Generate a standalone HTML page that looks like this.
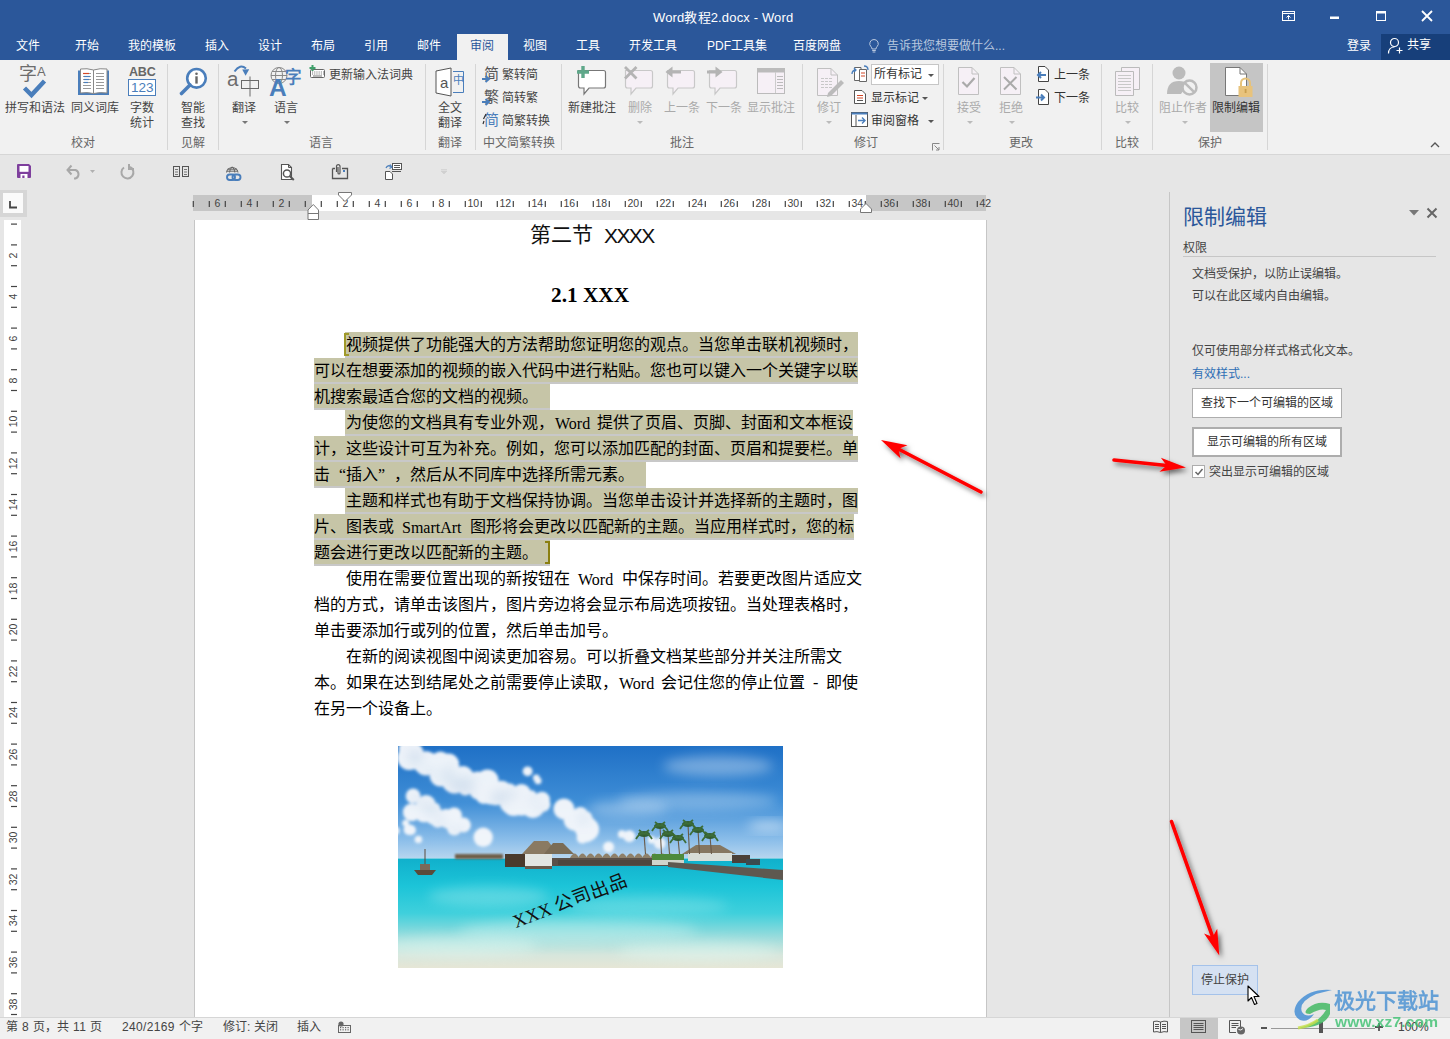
<!DOCTYPE html><html lang="zh-CN"><head><meta charset="utf-8"><title>Word</title><style>
*{margin:0;padding:0;box-sizing:border-box}
html,body{width:1450px;height:1039px;overflow:hidden;background:#e6e6e6;font-family:"Liberation Sans",sans-serif;position:relative}
.a{position:absolute}
.t{position:absolute;white-space:nowrap;line-height:1}
.w{color:#fff}
.g{color:#444}
.lg{color:#a8a8a8}
svg{position:absolute;overflow:visible}
.doc{position:absolute;white-space:nowrap;font-family:"Liberation Serif",serif;font-size:16px;line-height:26px;height:26px;color:#000}
</style></head><body>
<div class="a" style="left:0;top:0;width:1450px;height:60px;background:#2b579a"></div>
<div class="a" style="left:1381px;top:34px;width:69px;height:26px;background:#173f7a"></div>
<div class="a" style="left:457px;top:34px;width:51px;height:26px;background:#f1f1f1"></div>
<div class="a" style="left:0;top:60px;width:1450px;height:94px;background:#f1f1f1"></div>
<div class="a" style="left:0;top:154px;width:1450px;height:1px;background:#d6d6d6"></div>
<div class="a" style="left:0;top:1017px;width:1450px;height:22px;background:#f1f1f1;border-top:1px solid #d6d6d6"></div>
<div class="t" style="left:653px;top:11px;font-size:13px;color:#fff;letter-spacing:0.15px">Word教程2.docx - Word</div>
<svg style="left:0;top:0" width="1450" height="34"><rect x="1282.5" y="11.5" width="12" height="9" fill="none" stroke="#fff" stroke-width="1"/><line x1="1282.5" y1="13.5" x2="1294.5" y2="13.5" stroke="#fff"/><path d="M1288.5 19.5 V15.5 M1286.5 17.5 L1288.5 15.5 L1290.5 17.5" fill="none" stroke="#fff"/><rect x="1330" y="16.5" width="9" height="2.5" fill="#fff"/><rect x="1376.5" y="11.5" width="9" height="9" fill="none" stroke="#fff" stroke-width="1"/><rect x="1376" y="11" width="10" height="2.5" fill="#fff"/><path d="M1422 11 L1432 21 M1432 11 L1422 21" stroke="#fff" stroke-width="1.8"/></svg>
<div class="t" style="left:16px;top:40px;font-size:12px;color:#fff;">文件</div>
<div class="t" style="left:75px;top:40px;font-size:12px;color:#fff;">开始</div>
<div class="t" style="left:128px;top:40px;font-size:12px;color:#fff;">我的模板</div>
<div class="t" style="left:205px;top:40px;font-size:12px;color:#fff;">插入</div>
<div class="t" style="left:258px;top:40px;font-size:12px;color:#fff;">设计</div>
<div class="t" style="left:311px;top:40px;font-size:12px;color:#fff;">布局</div>
<div class="t" style="left:364px;top:40px;font-size:12px;color:#fff;">引用</div>
<div class="t" style="left:417px;top:40px;font-size:12px;color:#fff;">邮件</div>
<div class="t" style="left:523px;top:40px;font-size:12px;color:#fff;">视图</div>
<div class="t" style="left:576px;top:40px;font-size:12px;color:#fff;">工具</div>
<div class="t" style="left:629px;top:40px;font-size:12px;color:#fff;">开发工具</div>
<div class="t" style="left:707px;top:40px;font-size:12px;color:#fff;">PDF工具集</div>
<div class="t" style="left:793px;top:40px;font-size:12px;color:#fff;">百度网盘</div>
<div class="t" style="left:470px;top:40px;font-size:12px;color:#2b579a;">审阅</div>
<svg style="left:868px;top:38px" width="14" height="16"><path d="M6 1.5 a4.2 4.2 0 0 1 3 7.2 c-.8 .8 -1 1.5 -1 2.3 h-4 c0-.8 -.2-1.5 -1-2.3 a4.2 4.2 0 0 1 3-7.2z M4.2 12.5 h3.6 M4.6 14 h2.8" fill="none" stroke="#b9c8df" stroke-width="1"/></svg>
<div class="t" style="left:887px;top:40px;font-size:12px;color:#b9c8df;">告诉我您想要做什么...</div>
<div class="t" style="left:1347px;top:40px;font-size:12px;color:#fff;">登录</div>
<svg style="left:1387px;top:37px" width="18" height="18"><circle cx="7.5" cy="5.5" r="4" fill="none" stroke="#fff" stroke-width="1.2"/><path d="M1.5 16.5 c0-4 2.5-6.5 6-6.5" fill="none" stroke="#fff" stroke-width="1.2"/><path d="M12.5 10.5 v6 M9.5 13.5 h6" stroke="#fff" stroke-width="1.2"/></svg>
<div class="t" style="left:1407px;top:39px;font-size:12px;color:#fff;">共享</div>
<div class="a" style="left:167px;top:64px;width:1px;height:86px;background:#d6d6d6"></div>
<div class="a" style="left:218px;top:64px;width:1px;height:86px;background:#d6d6d6"></div>
<div class="a" style="left:425px;top:64px;width:1px;height:86px;background:#d6d6d6"></div>
<div class="a" style="left:475px;top:64px;width:1px;height:86px;background:#d6d6d6"></div>
<div class="a" style="left:561px;top:64px;width:1px;height:86px;background:#d6d6d6"></div>
<div class="a" style="left:802px;top:64px;width:1px;height:86px;background:#d6d6d6"></div>
<div class="a" style="left:943px;top:64px;width:1px;height:86px;background:#d6d6d6"></div>
<div class="a" style="left:1101px;top:64px;width:1px;height:86px;background:#d6d6d6"></div>
<div class="a" style="left:1152px;top:64px;width:1px;height:86px;background:#d6d6d6"></div>
<div class="a" style="left:1267px;top:64px;width:1px;height:86px;background:#d6d6d6"></div>
<div class="t" style="left:71px;top:137px;font-size:12px;color:#666;">校对</div>
<div class="t" style="left:181px;top:137px;font-size:12px;color:#666;">见解</div>
<div class="t" style="left:309px;top:137px;font-size:12px;color:#666;">语言</div>
<div class="t" style="left:438px;top:137px;font-size:12px;color:#666;">翻译</div>
<div class="t" style="left:483px;top:137px;font-size:12px;color:#666;">中文简繁转换</div>
<div class="t" style="left:670px;top:137px;font-size:12px;color:#666;">批注</div>
<div class="t" style="left:854px;top:137px;font-size:12px;color:#666;">修订</div>
<div class="t" style="left:1009px;top:137px;font-size:12px;color:#666;">更改</div>
<div class="t" style="left:1115px;top:137px;font-size:12px;color:#666;">比较</div>
<div class="t" style="left:1198px;top:137px;font-size:12px;color:#666;">保护</div>
<svg style="left:932px;top:143px" width="8" height="8" viewBox="0 0 8 8"><path d="M0.5 0.5 H7.5 M0.5 0.5 V7.5" stroke="#888" fill="none"/><path d="M2.5 2.5 L7 7 M7 4 V7 H4" stroke="#888" fill="none"/></svg>
<svg style="left:1430px;top:142px" width="10" height="6" viewBox="0 0 10 6"><path d="M1 5 L5 1 L9 5" stroke="#555" stroke-width="1.3" fill="none"/></svg>
<div class="t" style="left:5px;top:102px;font-size:12px;color:#444;">拼写和语法</div>
<div class="t" style="left:71px;top:102px;font-size:12px;color:#444;">同义词库</div>
<div class="t" style="left:130px;top:102px;font-size:12px;color:#444;">字数</div>
<div class="t" style="left:130px;top:117px;font-size:12px;color:#444;">统计</div>
<div class="t" style="left:19px;top:65px;font-size:18px;color:#6d6d6d;font-weight:300">字</div>
<div class="t" style="left:37px;top:65px;font-size:13px;color:#6d6d6d;">A</div>
<svg style="left:20px;top:76px" width="28" height="24" viewBox="0 0 28 24"><path d="M4.5 12 L11.5 19 L24.5 5" stroke="#4a7ebb" stroke-width="4.4" fill="none" stroke-linejoin="miter"/></svg>
<svg style="left:78px;top:68px" width="32" height="28" viewBox="0 0 32 28"><path d="M0 2.5 H31 V27 H0z" fill="#4a7ebb"/><path d="M2.5 1 Q9 0 15.5 2 Q22 0 29 1 V25 Q22 24 15.5 25.5 Q9 24 2.5 25z" fill="#fff" stroke="#888" stroke-width="1"/><line x1="15.5" y1="2" x2="15.5" y2="25.5" stroke="#888" stroke-width="1"/><line x1="5" y1="5.5" x2="13" y2="5.5" stroke="#999" stroke-width="1"/><line x1="18" y1="5.5" x2="26" y2="5.5" stroke="#999" stroke-width="1"/><line x1="5" y1="8.5" x2="13" y2="8.5" stroke="#999" stroke-width="1"/><line x1="18" y1="8.5" x2="26" y2="8.5" stroke="#999" stroke-width="1"/><line x1="5" y1="11.5" x2="13" y2="11.5" stroke="#999" stroke-width="1"/><line x1="18" y1="11.5" x2="26" y2="11.5" stroke="#999" stroke-width="1"/><line x1="5" y1="14.5" x2="13" y2="14.5" stroke="#999" stroke-width="1"/><line x1="18" y1="14.5" x2="26" y2="14.5" stroke="#999" stroke-width="1"/><line x1="5" y1="17.5" x2="13" y2="17.5" stroke="#999" stroke-width="1"/><line x1="18" y1="17.5" x2="26" y2="17.5" stroke="#999" stroke-width="1"/><line x1="5" y1="20.5" x2="13" y2="20.5" stroke="#999" stroke-width="1"/><line x1="18" y1="20.5" x2="26" y2="20.5" stroke="#999" stroke-width="1"/><line x1="5" y1="5.5" x2="11" y2="5.5" stroke="#d24726" stroke-width="1.2"/><line x1="6" y1="8.5" x2="12" y2="8.5" stroke="#4a7ebb" stroke-width="1.2"/><line x1="6" y1="11.5" x2="11" y2="11.5" stroke="#4a7ebb" stroke-width="1.2"/><line x1="6" y1="14.5" x2="10" y2="14.5" stroke="#4a7ebb" stroke-width="1.2"/></svg>
<div class="t" style="left:129px;top:66px;font-size:12.5px;color:#666;font-weight:bold;letter-spacing:-0.2px;-webkit-text-stroke:0px">ABC</div>
<svg style="left:128px;top:79px" width="28" height="17" viewBox="0 0 28 17"><rect x="0.5" y="0.5" width="27" height="16" fill="#fff" stroke="#4a7ebb" stroke-width="1"/></svg>
<div class="t" style="left:131px;top:81px;font-size:13.5px;color:#4a7ebb;">123</div>
<svg style="left:178px;top:67px" width="30" height="30" viewBox="0 0 30 30"><circle cx="18.5" cy="11.3" r="9.3" fill="#fff" stroke="#4a7ebb" stroke-width="2.6"/><path d="M12 18 L3.5 26.5" stroke="#4a7ebb" stroke-width="3.6" stroke-linecap="round"/><circle cx="18.5" cy="6.8" r="1.3" fill="#666"/><rect x="17.3" y="9.3" width="2.4" height="7.3" fill="#666"/></svg>
<div class="t" style="left:181px;top:102px;font-size:12px;color:#444;">智能</div>
<div class="t" style="left:181px;top:117px;font-size:12px;color:#444;">查找</div>
<div class="t" style="left:227px;top:69px;font-size:20.5px;color:#6d6d6d;">a</div>
<svg style="left:240px;top:66px" width="22" height="32" viewBox="0 0 22 32"><path d="M-5.5 5.5 Q0 -2.5 6 2.5" stroke="#4a7ebb" stroke-width="2" fill="none"/><path d="M2.2 3.5 L5.6 9.8 L9.2 3.3z" fill="#4a7ebb"/><rect x="1.5" y="14.5" width="17" height="8" fill="none" stroke="#6a6a6a" stroke-width="1"/><line x1="10" y1="10.5" x2="10" y2="30.5" stroke="#6a6a6a"/></svg>
<div class="t" style="left:232px;top:102px;font-size:12px;color:#444;">翻译</div>
<svg style="left:242px;top:121px" width="6" height="3"><path d="M0 0 H6 L3 3z" fill="#777"/></svg>
<svg style="left:270px;top:66px" width="32" height="32" viewBox="0 0 32 32"><circle cx="9" cy="9.5" r="8" fill="none" stroke="#888" stroke-width="1"/><ellipse cx="9" cy="9.5" rx="3.5" ry="8" fill="none" stroke="#888"/><line x1="1" y1="9.5" x2="17" y2="9.5" stroke="#888"/><line x1="2" y1="5.5" x2="16" y2="5.5" stroke="#888"/><line x1="2" y1="13.5" x2="16" y2="13.5" stroke="#888"/></svg>
<div class="t" style="left:269px;top:76px;font-size:24.5px;color:#4a7ebb;font-weight:bold">A</div>
<div class="t" style="left:285px;top:69px;font-size:16.5px;color:#4a7ebb;font-weight:bold">字</div>
<div class="t" style="left:274px;top:102px;font-size:12px;color:#444;">语言</div>
<svg style="left:284px;top:121px" width="6" height="3"><path d="M0 0 H6 L3 3z" fill="#777"/></svg>
<svg style="left:309px;top:65px" width="17" height="14" viewBox="0 0 17 14"><rect x="1.5" y="4.5" width="14" height="8" rx="1" fill="#fff" stroke="#666"/><rect x="3.0" y="6.5" width="1.1" height="1" fill="#777"/><rect x="3.0" y="8.5" width="1.1" height="1" fill="#777"/><rect x="5.2" y="6.5" width="1.1" height="1" fill="#777"/><rect x="5.2" y="8.5" width="1.1" height="1" fill="#777"/><rect x="7.4" y="6.5" width="1.1" height="1" fill="#777"/><rect x="7.4" y="8.5" width="1.1" height="1" fill="#777"/><rect x="9.6" y="6.5" width="1.1" height="1" fill="#777"/><rect x="9.6" y="8.5" width="1.1" height="1" fill="#777"/><rect x="11.8" y="6.5" width="1.1" height="1" fill="#777"/><rect x="11.8" y="8.5" width="1.1" height="1" fill="#777"/><rect x="14.0" y="6.5" width="1.1" height="1" fill="#777"/><rect x="14.0" y="8.5" width="1.1" height="1" fill="#777"/><rect x="4" y="10.5" width="9" height="1" fill="#777"/><path d="M3.5 0 V6 M0.5 3 H6.5" stroke="#3fa06a" stroke-width="2"/></svg>
<div class="t" style="left:329px;top:69px;font-size:12px;color:#444;">更新输入法词典</div>
<svg style="left:435px;top:67px" width="30" height="30" viewBox="0 0 30 30"><path d="M1 4 L16 1 V29 L1 26z" fill="#fff" stroke="#555" stroke-width="1"/><path d="M18 4.5 H28.5 V25.5 H18" fill="none" stroke="#4a7ebb" stroke-width="1"/></svg>
<div class="t" style="left:440px;top:75px;font-size:15px;color:#555;">a</div>
<div class="t" style="left:453px;top:75px;font-size:11px;color:#4a7ebb;">中</div>
<div class="t" style="left:438px;top:102px;font-size:12px;color:#444;">全文</div>
<div class="t" style="left:438px;top:117px;font-size:12px;color:#444;">翻译</div>
<div class="t" style="left:484px;top:66px;font-size:15px;color:#555;">简</div>
<div class="t" style="left:502px;top:69px;font-size:12px;color:#444;">繁转简</div>
<div class="t" style="left:484px;top:89px;font-size:15px;color:#555;">繁</div>
<div class="t" style="left:502px;top:92px;font-size:12px;color:#444;">简转繁</div>
<div class="t" style="left:484px;top:112px;font-size:15px;color:#4a7ebb;">简</div>
<div class="t" style="left:502px;top:115px;font-size:12px;color:#444;">简繁转换</div>
<svg style="left:482px;top:75px" width="10" height="8" viewBox="0 0 10 8"><path d="M0 4 H6 M3.5 1 L7 4 L3.5 7" stroke="#4a7ebb" stroke-width="2" fill="none"/></svg>
<svg style="left:482px;top:98px" width="10" height="8" viewBox="0 0 10 8"><path d="M0 4 H6 M3.5 1 L7 4 L3.5 7" stroke="#4a7ebb" stroke-width="2" fill="none"/></svg>
<svg style="left:482px;top:113px" width="6" height="12" viewBox="0 0 6 12"><path d="M4 1 L1.5 6 M2 8 L1 11" stroke="#333" stroke-width="1.2"/></svg>
<svg style="left:575px;top:64px" width="34" height="32" viewBox="0 0 34 32"><path d="M3.5 6.5 H28.5 Q30.5 6.5 30.5 8.5 V22 Q30.5 24 28.5 24 H14 L9 30 V24 H5.5 Q3.5 24 3.5 22z" fill="#fff" stroke="#777" stroke-width="1.2"/><path d="M8 2 V14 M2 8 H14" stroke="#5fa88a" stroke-width="3.4"/></svg>
<div class="t" style="left:568px;top:102px;font-size:12px;color:#444;">新建批注</div>
<svg style="left:622px;top:64px" width="34" height="32" viewBox="0 0 34 32"><path d="M3.5 6.5 H28.5 Q30.5 6.5 30.5 8.5 V22 Q30.5 24 28.5 24 H14 L9 30 V24 H5.5 Q3.5 24 3.5 22z" fill="#f6f0f6" stroke="#c8c8c8" stroke-width="1.2"/><path d="M3 3 L14.5 14.5 M14.5 3 L3 14.5" stroke="#b4b4b4" stroke-width="2.8"/></svg>
<div class="t" style="left:628px;top:102px;font-size:12px;color:#aaa;">删除</div>
<svg style="left:637px;top:121px" width="6" height="3"><path d="M0 0 H6 L3 3z" fill="#bbb"/></svg>
<svg style="left:664px;top:64px" width="34" height="32" viewBox="0 0 34 32"><path d="M3.5 6.5 H28.5 Q30.5 6.5 30.5 8.5 V22 Q30.5 24 28.5 24 H14 L9 30 V24 H5.5 Q3.5 24 3.5 22z" fill="#f6f0f6" stroke="#c8c8c8" stroke-width="1.2"/><path d="M17 8 H8" stroke="#b4b4b4" stroke-width="3"/><path d="M1.5 8 L8.5 2.5 V13.5z" fill="#b4b4b4"/></svg>
<div class="t" style="left:664px;top:102px;font-size:12px;color:#aaa;">上一条</div>
<svg style="left:706px;top:64px" width="34" height="32" viewBox="0 0 34 32"><path d="M3.5 6.5 H28.5 Q30.5 6.5 30.5 8.5 V22 Q30.5 24 28.5 24 H14 L9 30 V24 H5.5 Q3.5 24 3.5 22z" fill="#f6f0f6" stroke="#c8c8c8" stroke-width="1.2"/><path d="M1 8 H10" stroke="#b4b4b4" stroke-width="3"/><path d="M16.5 8 L9.5 2.5 V13.5z" fill="#b4b4b4"/></svg>
<div class="t" style="left:706px;top:102px;font-size:12px;color:#aaa;">下一条</div>
<svg style="left:757px;top:68px" width="29" height="27" viewBox="0 0 29 27"><rect x="0.5" y="0.5" width="27" height="25" fill="#f6f0f6" stroke="#bbb"/><rect x="0.5" y="0.5" width="27" height="4" fill="#bbb"/><line x1="18.5" y1="4" x2="18.5" y2="25" stroke="#ccc"/><line x1="20" y1="8.5" x2="26" y2="8.5" stroke="#bbb"/><line x1="20" y1="11.5" x2="26" y2="11.5" stroke="#bbb"/><line x1="20" y1="14.5" x2="26" y2="14.5" stroke="#bbb"/><line x1="20" y1="17.5" x2="26" y2="17.5" stroke="#bbb"/><line x1="20" y1="20.5" x2="26" y2="20.5" stroke="#bbb"/></svg>
<div class="t" style="left:747px;top:102px;font-size:12px;color:#aaa;">显示批注</div>
<svg style="left:816px;top:67px" width="30" height="32" viewBox="0 0 30 32"><path d="M1.5 1.5 H15 L21.5 8 V28.5 H1.5z" fill="#f6f0f6" stroke="#c0c0c0"/><path d="M15 1.5 V8 H21.5" fill="none" stroke="#c0c0c0"/><line x1="5" y1="11.5" x2="17" y2="11.5" stroke="#c8c8c8" stroke-dasharray="3 1"/><line x1="5" y1="14.5" x2="17" y2="14.5" stroke="#c8c8c8" stroke-dasharray="3 1"/><line x1="5" y1="17.5" x2="17" y2="17.5" stroke="#c8c8c8" stroke-dasharray="3 1"/><line x1="5" y1="20.5" x2="17" y2="20.5" stroke="#c8c8c8" stroke-dasharray="3 1"/><path d="M12 26 L25 13 L28 16 L15 29 L11 30z" fill="#bbb"/></svg>
<div class="t" style="left:817px;top:102px;font-size:12px;color:#aaa;">修订</div>
<svg style="left:826px;top:121px" width="6" height="3"><path d="M0 0 H6 L3 3z" fill="#bbb"/></svg>
<svg style="left:851px;top:65px" width="18" height="18" viewBox="0 0 18 18"><path d="M3.5 2.5 H10 V15.5 H3.5z" fill="#fff" stroke="#666"/><path d="M8.5 4.5 H15.5 V16.5 H8.5z" fill="#fff" stroke="#666"/><line x1="10" y1="8" x2="14" y2="8" stroke="#d24726"/><line x1="10" y1="11" x2="14" y2="11" stroke="#d24726"/><path d="M1 9 Q1 5 5 5 M3 3 L5 5 L3 7" stroke="#4a7ebb" fill="none" stroke-width="1.3"/><path d="M13 1 Q17 1 17 5" stroke="#4a7ebb" fill="none" stroke-width="1.3"/></svg>
<div class="a" style="left:871px;top:64px;width:68px;height:21px;background:#fff;border:1px solid #c6c6c6"></div>
<div class="t" style="left:874px;top:68px;font-size:12px;color:#333;">所有标记</div>
<svg style="left:928px;top:74px" width="6" height="3"><path d="M0 0 H6 L3 3z" fill="#555"/></svg>
<svg style="left:853px;top:89px" width="14" height="16" viewBox="0 0 14 16"><path d="M1.5 1.5 H9 L12.5 5 V14.5 H1.5z" fill="#fff" stroke="#555"/><line x1="4" y1="6.5" x2="10" y2="6.5" stroke="#d24726"/><line x1="4" y1="9" x2="10" y2="9" stroke="#d24726"/><line x1="4" y1="11.5" x2="10" y2="11.5" stroke="#555"/></svg>
<div class="t" style="left:871px;top:92px;font-size:12px;color:#333;">显示标记</div>
<svg style="left:922px;top:97px" width="6" height="3"><path d="M0 0 H6 L3 3z" fill="#555"/></svg>
<svg style="left:851px;top:112px" width="18" height="16" viewBox="0 0 18 16"><rect x="0.5" y="0.5" width="16" height="14" fill="#fff" stroke="#555"/><rect x="0.5" y="0.5" width="16" height="2" fill="#4a7ebb"/><line x1="5" y1="3" x2="5" y2="14" stroke="#555"/><path d="M7 8.5 H14 M11 5.5 L14 8.5 L11 11.5" stroke="#4a7ebb" stroke-width="1.4" fill="none"/></svg>
<div class="t" style="left:871px;top:115px;font-size:12px;color:#333;">审阅窗格</div>
<svg style="left:928px;top:120px" width="6" height="3"><path d="M0 0 H6 L3 3z" fill="#555"/></svg>
<svg style="left:958px;top:67px" width="22" height="29" viewBox="0 0 22 29"><path d="M0.5 0.5 H14 L20.5 7 V27.5 H0.5z" fill="#f6f0f6" stroke="#c0c0c0"/><path d="M14 0.5 V7 H20.5" fill="none" stroke="#c0c0c0"/><path d="M4.5 15 L9 19.5 L16.5 11" stroke="#aaa" stroke-width="2.2" fill="none"/></svg>
<div class="t" style="left:957px;top:102px;font-size:12px;color:#aaa;">接受</div>
<svg style="left:967px;top:121px" width="6" height="3"><path d="M0 0 H6 L3 3z" fill="#bbb"/></svg>
<svg style="left:1000px;top:67px" width="22" height="29" viewBox="0 0 22 29"><path d="M0.5 0.5 H14 L20.5 7 V27.5 H0.5z" fill="#f6f0f6" stroke="#c0c0c0"/><path d="M14 0.5 V7 H20.5" fill="none" stroke="#c0c0c0"/><path d="M4 10 L16.5 22.5 M16.5 10 L4 22.5" stroke="#aaa" stroke-width="2" fill="none"/></svg>
<div class="t" style="left:999px;top:102px;font-size:12px;color:#aaa;">拒绝</div>
<svg style="left:1009px;top:121px" width="6" height="3"><path d="M0 0 H6 L3 3z" fill="#bbb"/></svg>
<svg style="left:1035px;top:66px" width="16" height="17" viewBox="0 0 16 17"><path d="M3.5 0.5 H10 L13.5 4 V15.5 H3.5z" fill="#fff" stroke="#444"/><path d="M11 9 H3 M6 6 L3 9 L6 12" stroke="#4a7ebb" stroke-width="2" fill="none"/></svg>
<div class="t" style="left:1054px;top:69px;font-size:12px;color:#333;">上一条</div>
<svg style="left:1035px;top:89px" width="16" height="17" viewBox="0 0 16 17"><path d="M3.5 0.5 H10 L13.5 4 V15.5 H3.5z" fill="#fff" stroke="#444"/><path d="M1 8.5 H9 M6 5.5 L9 8.5 L6 11.5" stroke="#4a7ebb" stroke-width="2" fill="none"/></svg>
<div class="t" style="left:1054px;top:92px;font-size:12px;color:#333;">下一条</div>
<svg style="left:1114px;top:67px" width="28" height="30" viewBox="0 0 28 30"><path d="M7.5 0.5 H25.5 V22.5 H7.5z" fill="#f6f0f6" stroke="#bbb"/><path d="M1.5 4.5 H19.5 V28.5 H1.5z" fill="#f6f0f6" stroke="#bbb"/><line x1="4" y1="8.5" x2="17" y2="8.5" stroke="#c8c8c8"/><line x1="4" y1="11.5" x2="17" y2="11.5" stroke="#c8c8c8"/><line x1="4" y1="14.5" x2="17" y2="14.5" stroke="#c8c8c8"/><line x1="4" y1="17.5" x2="17" y2="17.5" stroke="#c8c8c8"/><line x1="4" y1="20.5" x2="17" y2="20.5" stroke="#c8c8c8"/><line x1="4" y1="23.5" x2="17" y2="23.5" stroke="#c8c8c8"/></svg>
<div class="t" style="left:1115px;top:102px;font-size:12px;color:#aaa;">比较</div>
<svg style="left:1125px;top:121px" width="6" height="3"><path d="M0 0 H6 L3 3z" fill="#bbb"/></svg>
<svg style="left:1167px;top:66px" width="32" height="31" viewBox="0 0 32 31"><circle cx="12" cy="7" r="6.5" fill="#bbb"/><path d="M0 28 Q0 15 12 15 Q18 15 21 18 L14 28z" fill="#bbb"/><circle cx="22.5" cy="21.5" r="7" fill="#f1f1f1" stroke="#bbb" stroke-width="2.5"/><line x1="17.8" y1="16.8" x2="27.2" y2="26.2" stroke="#bbb" stroke-width="2.5"/></svg>
<div class="t" style="left:1159px;top:102px;font-size:12px;color:#aaa;">阻止作者</div>
<svg style="left:1182px;top:121px" width="6" height="3"><path d="M0 0 H6 L3 3z" fill="#bbb"/></svg>
<div class="a" style="left:1210px;top:63px;width:53px;height:69px;background:#c5c5c5"></div>
<svg style="left:1225px;top:67px" width="30" height="32" viewBox="0 0 30 32"><path d="M0.5 0.5 H15 L21.5 7 V28.5 H0.5z" fill="#fff" stroke="#777"/><path d="M15 0.5 V7 H21.5" fill="none" stroke="#777"/><path d="M16 19 V16 A4.5 4.5 0 0 1 25 16 V19" fill="none" stroke="#e6c27a" stroke-width="2"/><rect x="13.5" y="19" width="14" height="11" fill="#e8c37c"/><rect x="19.7" y="22" width="1.8" height="4" fill="#c9a050"/></svg>
<div class="t" style="left:1212px;top:102px;font-size:12px;color:#333;">限制编辑</div>
<div class="a" style="left:194px;top:220px;width:793px;height:797px;background:#fff;border-left:1px solid #c6c6c6;border-right:1px solid #c6c6c6"></div>
<svg style="left:17px;top:164px;" width="15" height="15" viewBox="0 0 15 15"><path d="M1 0 H12 L14 2 V13 Q14 14 13 14 H1 Q0 14 0 13 V1 Q0 0 1 0z" fill="#7e3f9d"/><rect x="2.5" y="2" width="9" height="5.8" fill="#fff"/><rect x="3.5" y="10" width="7" height="4" fill="#fff"/><rect x="5.3" y="11.5" width="2.2" height="2.5" fill="#7e3f9d"/></svg>
<svg style="left:66px;top:164px;" width="16" height="15" viewBox="0 0 16 15"><path d="M2 6 H9.5 A4.5 4.5 0 0 1 9.5 14.5 H8" fill="none" stroke="#a8a8a8" stroke-width="2"/><path d="M5.5 1.5 L1.5 6 L5.5 10.5" fill="none" stroke="#a8a8a8" stroke-width="2"/></svg>
<svg style="left:90px;top:170px;" width="6" height="3" viewBox="0 0 6 3"><path d="M0 0 H5 L2.5 3z" fill="#b0b0b0"/></svg>
<svg style="left:120px;top:164px;" width="16" height="15" viewBox="0 0 16 15"><path d="M10 3 A6 6 0 1 1 4 3.5" fill="none" stroke="#a8a8a8" stroke-width="2"/><path d="M9 0 V5 H14" fill="none" stroke="#a8a8a8" stroke-width="2"/></svg>
<svg style="left:172px;top:165px;" width="18" height="13" viewBox="0 0 18 13"><rect x="1.5" y="1.5" width="6" height="10" fill="none" stroke="#555"/><rect x="10.5" y="1.5" width="6" height="10" fill="none" stroke="#555"/><line x1="3" y1="4.5" x2="6" y2="4.5" stroke="#777"/><line x1="12" y1="4.5" x2="15" y2="4.5" stroke="#777"/><line x1="3" y1="7" x2="6" y2="7" stroke="#777"/><line x1="12" y1="7" x2="15" y2="7" stroke="#777"/><line x1="3" y1="9.5" x2="6" y2="9.5" stroke="#777"/><line x1="12" y1="9.5" x2="15" y2="9.5" stroke="#777"/></svg>
<svg style="left:225px;top:163px;" width="18" height="18" viewBox="0 0 18 18"><path d="M1.5 9.5 A5.8 5.8 0 0 1 13 9.5" fill="none" stroke="#666" stroke-width="1.1"/><path d="M7.2 3.8 Q4.6 6 4.6 9.5 M7.2 3.8 Q9.8 6 9.8 9.5 M2.6 6.2 H11.8 M2 8.2 H12.4" fill="none" stroke="#666" stroke-width="1"/><rect x="2" y="11.5" width="8" height="5.5" rx="2.75" fill="none" stroke="#4a7ebb" stroke-width="1.9"/><rect x="7.5" y="11.5" width="8" height="5.5" rx="2.75" fill="none" stroke="#4a7ebb" stroke-width="1.9"/></svg>
<svg style="left:280px;top:163px;" width="17" height="18" viewBox="0 0 17 18"><path d="M1.5 1.5 H8.5 L11.5 4.5 V16.5 H1.5z" fill="#fff" stroke="#555" stroke-width="1.1"/><path d="M8.5 1.5 V4.5 H11.5" fill="none" stroke="#555"/><circle cx="7" cy="10.5" r="3.6" fill="#fff" stroke="#555" stroke-width="1.5"/><path d="M9.6 13.1 L13.8 17" stroke="#555" stroke-width="2"/></svg>
<svg style="left:331px;top:163px;" width="18" height="17" viewBox="0 0 18 17"><path d="M1.5 5.5 H4 M11 5.5 H16.5 V15.5 H1.5 V5.5" fill="none" stroke="#555" stroke-width="1.3"/><path d="M5.5 9 V3 A1.8 1.8 0 0 1 9 3 V10 A1 1 0 0 1 7 10 V4" fill="none" stroke="#555" stroke-width="1.2"/><rect x="12" y="7" width="2" height="2" fill="#4a7ebb"/></svg>
<svg style="left:384px;top:163px;" width="18" height="18" viewBox="0 0 18 18"><rect x="8.5" y="0.5" width="9" height="6" fill="#fff" stroke="#555"/><line x1="10" y1="2.5" x2="16" y2="2.5" stroke="#555"/><line x1="10" y1="4.5" x2="16" y2="4.5" stroke="#555"/><line x1="8" y1="8.5" x2="17" y2="8.5" stroke="#555"/><path d="M1.5 8.5 H6 L8.5 11 V16.5 H1.5z" fill="#fff" stroke="#555"/><path d="M2 5 Q4 1.5 7 3.5" fill="none" stroke="#4a7ebb" stroke-width="1.3"/><path d="M5.5 5.5 L8 4 L6 1.5" fill="none" stroke="#4a7ebb" stroke-width="1.2"/></svg>
<svg style="left:441px;top:169px;" width="6" height="6" viewBox="0 0 6 6"><path d="M0 0.5 H6 M0 2 H6 L3 5z" fill="#d0d0d0" stroke="#d0d0d0" stroke-width="0.8"/></svg>
<div class="a" style="left:0;top:190px;width:27px;height:27px;background:#d6d6d6"></div>
<div class="a" style="left:3px;top:193px;width:20px;height:20px;background:#fafafa"></div>
<svg style="left:9px;top:201px;" width="9" height="8" viewBox="0 0 9 8"><path d="M1 0 V6.5 H8" fill="none" stroke="#444" stroke-width="1.8"/></svg>
<div class="a" style="left:193px;top:195px;width:793px;height:16px;background:#c6c6c6"></div>
<div class="a" style="left:312px;top:195px;width:554px;height:16px;background:#fff"></div>
<svg style="left:0px;top:0px;" width="1000" height="220" viewBox="0 0 1000 220"><rect x="192.7" y="201" width="1.2" height="6" fill="#444"/><rect x="208.7" y="201" width="1.2" height="6" fill="#444"/><rect x="224.7" y="201" width="1.2" height="6" fill="#444"/><rect x="240.7" y="201" width="1.2" height="6" fill="#444"/><rect x="256.7" y="201" width="1.2" height="6" fill="#444"/><rect x="272.7" y="201" width="1.2" height="6" fill="#444"/><rect x="288.7" y="201" width="1.2" height="6" fill="#444"/><rect x="304.7" y="201" width="1.2" height="6" fill="#444"/><rect x="320.7" y="201" width="1.2" height="6" fill="#444"/><rect x="336.7" y="201" width="1.2" height="6" fill="#444"/><rect x="352.7" y="201" width="1.2" height="6" fill="#444"/><rect x="368.7" y="201" width="1.2" height="6" fill="#444"/><rect x="384.7" y="201" width="1.2" height="6" fill="#444"/><rect x="400.7" y="201" width="1.2" height="6" fill="#444"/><rect x="416.7" y="201" width="1.2" height="6" fill="#444"/><rect x="432.7" y="201" width="1.2" height="6" fill="#444"/><rect x="448.7" y="201" width="1.2" height="6" fill="#444"/><rect x="464.7" y="201" width="1.2" height="6" fill="#444"/><rect x="480.7" y="201" width="1.2" height="6" fill="#444"/><rect x="496.7" y="201" width="1.2" height="6" fill="#444"/><rect x="512.7" y="201" width="1.2" height="6" fill="#444"/><rect x="528.7" y="201" width="1.2" height="6" fill="#444"/><rect x="544.7" y="201" width="1.2" height="6" fill="#444"/><rect x="560.7" y="201" width="1.2" height="6" fill="#444"/><rect x="576.7" y="201" width="1.2" height="6" fill="#444"/><rect x="592.7" y="201" width="1.2" height="6" fill="#444"/><rect x="608.7" y="201" width="1.2" height="6" fill="#444"/><rect x="624.7" y="201" width="1.2" height="6" fill="#444"/><rect x="640.7" y="201" width="1.2" height="6" fill="#444"/><rect x="656.7" y="201" width="1.2" height="6" fill="#444"/><rect x="672.7" y="201" width="1.2" height="6" fill="#444"/><rect x="688.7" y="201" width="1.2" height="6" fill="#444"/><rect x="704.7" y="201" width="1.2" height="6" fill="#444"/><rect x="720.7" y="201" width="1.2" height="6" fill="#444"/><rect x="736.7" y="201" width="1.2" height="6" fill="#444"/><rect x="752.7" y="201" width="1.2" height="6" fill="#444"/><rect x="768.7" y="201" width="1.2" height="6" fill="#444"/><rect x="784.7" y="201" width="1.2" height="6" fill="#444"/><rect x="800.7" y="201" width="1.2" height="6" fill="#444"/><rect x="816.7" y="201" width="1.2" height="6" fill="#444"/><rect x="832.7" y="201" width="1.2" height="6" fill="#444"/><rect x="848.7" y="201" width="1.2" height="6" fill="#444"/><rect x="864.7" y="201" width="1.2" height="6" fill="#444"/><rect x="880.7" y="201" width="1.2" height="6" fill="#444"/><rect x="896.7" y="201" width="1.2" height="6" fill="#444"/><rect x="912.7" y="201" width="1.2" height="6" fill="#444"/><rect x="928.7" y="201" width="1.2" height="6" fill="#444"/><rect x="944.7" y="201" width="1.2" height="6" fill="#444"/><rect x="960.7" y="201" width="1.2" height="6" fill="#444"/><rect x="976.7" y="201" width="1.2" height="6" fill="#444"/></svg>
<div class="t" style="left:207.3px;top:198px;width:20px;text-align:center;font-size:10.5px;color:#444">6</div>
<div class="t" style="left:239.3px;top:198px;width:20px;text-align:center;font-size:10.5px;color:#444">4</div>
<div class="t" style="left:271.3px;top:198px;width:20px;text-align:center;font-size:10.5px;color:#444">2</div>
<div class="t" style="left:335.3px;top:198px;width:20px;text-align:center;font-size:10.5px;color:#444">2</div>
<div class="t" style="left:367.3px;top:198px;width:20px;text-align:center;font-size:10.5px;color:#444">4</div>
<div class="t" style="left:399.3px;top:198px;width:20px;text-align:center;font-size:10.5px;color:#444">6</div>
<div class="t" style="left:431.3px;top:198px;width:20px;text-align:center;font-size:10.5px;color:#444">8</div>
<div class="t" style="left:463.3px;top:198px;width:20px;text-align:center;font-size:10.5px;color:#444">10</div>
<div class="t" style="left:495.3px;top:198px;width:20px;text-align:center;font-size:10.5px;color:#444">12</div>
<div class="t" style="left:527.3px;top:198px;width:20px;text-align:center;font-size:10.5px;color:#444">14</div>
<div class="t" style="left:559.3px;top:198px;width:20px;text-align:center;font-size:10.5px;color:#444">16</div>
<div class="t" style="left:591.3px;top:198px;width:20px;text-align:center;font-size:10.5px;color:#444">18</div>
<div class="t" style="left:623.3px;top:198px;width:20px;text-align:center;font-size:10.5px;color:#444">20</div>
<div class="t" style="left:655.3px;top:198px;width:20px;text-align:center;font-size:10.5px;color:#444">22</div>
<div class="t" style="left:687.3px;top:198px;width:20px;text-align:center;font-size:10.5px;color:#444">24</div>
<div class="t" style="left:719.3px;top:198px;width:20px;text-align:center;font-size:10.5px;color:#444">26</div>
<div class="t" style="left:751.3px;top:198px;width:20px;text-align:center;font-size:10.5px;color:#444">28</div>
<div class="t" style="left:783.3px;top:198px;width:20px;text-align:center;font-size:10.5px;color:#444">30</div>
<div class="t" style="left:815.3px;top:198px;width:20px;text-align:center;font-size:10.5px;color:#444">32</div>
<div class="t" style="left:847.3px;top:198px;width:20px;text-align:center;font-size:10.5px;color:#444">34</div>
<div class="t" style="left:879.3px;top:198px;width:20px;text-align:center;font-size:10.5px;color:#444">36</div>
<div class="t" style="left:911.3px;top:198px;width:20px;text-align:center;font-size:10.5px;color:#444">38</div>
<div class="t" style="left:943.3px;top:198px;width:20px;text-align:center;font-size:10.5px;color:#444">40</div>
<div class="t" style="left:975.3px;top:198px;width:20px;text-align:center;font-size:10.5px;color:#444">42</div>
<svg style="left:337px;top:191px;" width="16" height="12" viewBox="0 0 16 12"><path d="M1.5 1.5 H14.5 V4 L8 10.5 L1.5 4z" fill="#fff" stroke="#777"/></svg>
<svg style="left:307px;top:204px;" width="13" height="16" viewBox="0 0 13 16"><path d="M6.3 0.5 L11.5 6 V15.5 H1 V6z" fill="#fff" stroke="#777"/><line x1="1" y1="9.5" x2="11.5" y2="9.5" stroke="#777"/></svg>
<svg style="left:859px;top:203px;" width="14" height="10" viewBox="0 0 14 10"><path d="M7 0.5 L12.5 6 V9.5 H1.5 V6z" fill="#fff" stroke="#777"/></svg>
<div class="a" style="left:4px;top:220px;width:17px;height:797px;background:#fff"></div>
<svg style="left:0px;top:0px;" width="30" height="1039" viewBox="0 0 30 1039"><rect x="11" y="223.5" width="6" height="1.2" fill="#444"/><rect x="11" y="244.3" width="6" height="1.2" fill="#444"/><rect x="11" y="265.1" width="6" height="1.2" fill="#444"/><rect x="11" y="285.9" width="6" height="1.2" fill="#444"/><rect x="11" y="306.7" width="6" height="1.2" fill="#444"/><rect x="11" y="327.5" width="6" height="1.2" fill="#444"/><rect x="11" y="348.3" width="6" height="1.2" fill="#444"/><rect x="11" y="369.1" width="6" height="1.2" fill="#444"/><rect x="11" y="389.9" width="6" height="1.2" fill="#444"/><rect x="11" y="410.7" width="6" height="1.2" fill="#444"/><rect x="11" y="431.5" width="6" height="1.2" fill="#444"/><rect x="11" y="452.3" width="6" height="1.2" fill="#444"/><rect x="11" y="473.1" width="6" height="1.2" fill="#444"/><rect x="11" y="493.9" width="6" height="1.2" fill="#444"/><rect x="11" y="514.7" width="6" height="1.2" fill="#444"/><rect x="11" y="535.5" width="6" height="1.2" fill="#444"/><rect x="11" y="556.3" width="6" height="1.2" fill="#444"/><rect x="11" y="577.1" width="6" height="1.2" fill="#444"/><rect x="11" y="597.9" width="6" height="1.2" fill="#444"/><rect x="11" y="618.7" width="6" height="1.2" fill="#444"/><rect x="11" y="639.5" width="6" height="1.2" fill="#444"/><rect x="11" y="660.3" width="6" height="1.2" fill="#444"/><rect x="11" y="681.1" width="6" height="1.2" fill="#444"/><rect x="11" y="701.9" width="6" height="1.2" fill="#444"/><rect x="11" y="722.7" width="6" height="1.2" fill="#444"/><rect x="11" y="743.5" width="6" height="1.2" fill="#444"/><rect x="11" y="764.3" width="6" height="1.2" fill="#444"/><rect x="11" y="785.1" width="6" height="1.2" fill="#444"/><rect x="11" y="805.9" width="6" height="1.2" fill="#444"/><rect x="11" y="826.7" width="6" height="1.2" fill="#444"/><rect x="11" y="847.5" width="6" height="1.2" fill="#444"/><rect x="11" y="868.3" width="6" height="1.2" fill="#444"/><rect x="11" y="889.1" width="6" height="1.2" fill="#444"/><rect x="11" y="909.9" width="6" height="1.2" fill="#444"/><rect x="11" y="930.7" width="6" height="1.2" fill="#444"/><rect x="11" y="951.5" width="6" height="1.2" fill="#444"/><rect x="11" y="972.3" width="6" height="1.2" fill="#444"/><rect x="11" y="993.1" width="6" height="1.2" fill="#444"/><rect x="11" y="1013.9" width="6" height="1.2" fill="#444"/></svg>
<div class="t" style="left:3px;top:249.8px;width:20px;height:11px;text-align:center;font-size:10.5px;color:#444;transform:rotate(-90deg)">2</div>
<div class="t" style="left:3px;top:291.4px;width:20px;height:11px;text-align:center;font-size:10.5px;color:#444;transform:rotate(-90deg)">4</div>
<div class="t" style="left:3px;top:333.0px;width:20px;height:11px;text-align:center;font-size:10.5px;color:#444;transform:rotate(-90deg)">6</div>
<div class="t" style="left:3px;top:374.6px;width:20px;height:11px;text-align:center;font-size:10.5px;color:#444;transform:rotate(-90deg)">8</div>
<div class="t" style="left:3px;top:416.2px;width:20px;height:11px;text-align:center;font-size:10.5px;color:#444;transform:rotate(-90deg)">10</div>
<div class="t" style="left:3px;top:457.8px;width:20px;height:11px;text-align:center;font-size:10.5px;color:#444;transform:rotate(-90deg)">12</div>
<div class="t" style="left:3px;top:499.4px;width:20px;height:11px;text-align:center;font-size:10.5px;color:#444;transform:rotate(-90deg)">14</div>
<div class="t" style="left:3px;top:541.0px;width:20px;height:11px;text-align:center;font-size:10.5px;color:#444;transform:rotate(-90deg)">16</div>
<div class="t" style="left:3px;top:582.6px;width:20px;height:11px;text-align:center;font-size:10.5px;color:#444;transform:rotate(-90deg)">18</div>
<div class="t" style="left:3px;top:624.2px;width:20px;height:11px;text-align:center;font-size:10.5px;color:#444;transform:rotate(-90deg)">20</div>
<div class="t" style="left:3px;top:665.8px;width:20px;height:11px;text-align:center;font-size:10.5px;color:#444;transform:rotate(-90deg)">22</div>
<div class="t" style="left:3px;top:707.4px;width:20px;height:11px;text-align:center;font-size:10.5px;color:#444;transform:rotate(-90deg)">24</div>
<div class="t" style="left:3px;top:749.0px;width:20px;height:11px;text-align:center;font-size:10.5px;color:#444;transform:rotate(-90deg)">26</div>
<div class="t" style="left:3px;top:790.6px;width:20px;height:11px;text-align:center;font-size:10.5px;color:#444;transform:rotate(-90deg)">28</div>
<div class="t" style="left:3px;top:832.2px;width:20px;height:11px;text-align:center;font-size:10.5px;color:#444;transform:rotate(-90deg)">30</div>
<div class="t" style="left:3px;top:873.8px;width:20px;height:11px;text-align:center;font-size:10.5px;color:#444;transform:rotate(-90deg)">32</div>
<div class="t" style="left:3px;top:915.4px;width:20px;height:11px;text-align:center;font-size:10.5px;color:#444;transform:rotate(-90deg)">34</div>
<div class="t" style="left:3px;top:957.0px;width:20px;height:11px;text-align:center;font-size:10.5px;color:#444;transform:rotate(-90deg)">36</div>
<div class="t" style="left:3px;top:998.6px;width:20px;height:11px;text-align:center;font-size:10.5px;color:#444;transform:rotate(-90deg)">38</div>
<div class="t" style="left:530px;top:224px;font-size:21px;color:#111">第二节</div>
<div class="t" style="left:604px;top:225px;font-size:21px;color:#111;letter-spacing:-1.6px">XXXX</div>
<div class="t" style="left:551px;top:285px;font-family:'Liberation Serif',serif;font-weight:bold;font-size:21.3px;color:#000">2.1 XXX</div>
<div class="a" style="left:345px;top:332px;width:513px;height:24px;background:#c6c5a7"></div>
<div class="a" style="left:345px;top:356px;width:513px;height:2px;background:#c8c8c8"></div>
<div class="a" style="left:314px;top:358px;width:544px;height:24px;background:#c6c5a7"></div>
<div class="a" style="left:314px;top:382px;width:544px;height:2px;background:#c8c8c8"></div>
<div class="a" style="left:314px;top:384px;width:236px;height:24px;background:#c6c5a7"></div>
<div class="a" style="left:314px;top:408px;width:236px;height:2px;background:#c8c8c8"></div>
<div class="a" style="left:345px;top:410px;width:508px;height:24px;background:#c6c5a7"></div>
<div class="a" style="left:345px;top:434px;width:508px;height:2px;background:#c8c8c8"></div>
<div class="a" style="left:314px;top:436px;width:544px;height:24px;background:#c6c5a7"></div>
<div class="a" style="left:314px;top:460px;width:544px;height:2px;background:#c8c8c8"></div>
<div class="a" style="left:314px;top:462px;width:332px;height:24px;background:#c6c5a7"></div>
<div class="a" style="left:314px;top:486px;width:332px;height:2px;background:#c8c8c8"></div>
<div class="a" style="left:345px;top:488px;width:513px;height:24px;background:#c6c5a7"></div>
<div class="a" style="left:345px;top:512px;width:513px;height:2px;background:#c8c8c8"></div>
<div class="a" style="left:314px;top:514px;width:540px;height:24px;background:#c6c5a7"></div>
<div class="a" style="left:314px;top:538px;width:540px;height:2px;background:#c8c8c8"></div>
<div class="a" style="left:314px;top:540px;width:236px;height:24px;background:#c6c5a7"></div>
<div class="a" style="left:314px;top:564px;width:236px;height:2px;background:#c8c8c8"></div>
<div class="a" style="left:344px;top:333px;width:5px;height:23px;border:2px solid #a09a2a;border-right:none"></div>
<div class="a" style="left:545px;top:541px;width:5px;height:23px;border:2px solid #8a7f10;border-left:none"></div>
<div class="doc" style="left:346px;top:332px">视频提供了功能强大的方法帮助您证明您的观点。当您单击联机视频时，</div>
<div class="doc" style="left:314px;top:358px">可以在想要添加的视频的嵌入代码中进行粘贴。您也可以键入一个关键字以联</div>
<div class="doc" style="left:314px;top:384px">机搜索最适合您的文档的视频。</div>
<div class="doc" style="left:346px;top:410px">为使您的文档具有专业外观，</div>
<div class="doc" style="left:555px;top:411px">Word</div>
<div class="doc" style="left:597px;top:410px">提供了页眉、页脚、封面和文本框设</div>
<div class="doc" style="left:314px;top:436px">计，这些设计可互为补充。例如，您可以添加匹配的封面、页眉和提要栏。单</div>
<div class="doc" style="left:314px;top:462px">击<span style="display:inline-block;width:16px;text-align:right">“</span>插入<span style="display:inline-block;width:16px;text-align:left">”</span>，然后从不同库中选择所需元素。</div>
<div class="doc" style="left:346px;top:488px">主题和样式也有助于文档保持协调。当您单击设计并选择新的主题时，图</div>
<div class="doc" style="left:314px;top:514px">片、图表或</div>
<div class="doc" style="left:402px;top:515px">SmartArt</div>
<div class="doc" style="left:470px;top:514px">图形将会更改以匹配新的主题。当应用样式时，您的标</div>
<div class="doc" style="left:314px;top:540px">题会进行更改以匹配新的主题。</div>
<div class="doc" style="left:346px;top:566px">使用在需要位置出现的新按钮在</div>
<div class="doc" style="left:578px;top:567px">Word</div>
<div class="doc" style="left:622px;top:566px">中保存时间。若要更改图片适应文</div>
<div class="doc" style="left:314px;top:592px">档的方式，请单击该图片，图片旁边将会显示布局选项按钮。当处理表格时，</div>
<div class="doc" style="left:314px;top:618px">单击要添加行或列的位置，然后单击加号。</div>
<div class="doc" style="left:346px;top:644px">在新的阅读视图中阅读更加容易。可以折叠文档某些部分并关注所需文</div>
<div class="doc" style="left:314px;top:670px">本。如果在达到结尾处之前需要停止读取，</div>
<div class="doc" style="left:619px;top:671px">Word</div>
<div class="doc" style="left:661px;top:670px">会记住您的停止位置</div>
<div class="doc" style="left:813px;top:670px">-</div>
<div class="doc" style="left:826px;top:670px">即使</div>
<div class="doc" style="left:314px;top:696px">在另一个设备上。</div>
<svg style="left:398px;top:746px;" width="385" height="222" viewBox="0 0 385 222"><defs><linearGradient id="sky" x1="0" y1="0" x2="0" y2="1"><stop offset="0" stop-color="#1f70c6"/><stop offset="0.5" stop-color="#3f8ed6"/><stop offset="0.85" stop-color="#8fc0ea"/><stop offset="1" stop-color="#b7d6ef"/></linearGradient><linearGradient id="sea" x1="0" y1="0" x2="0" y2="1"><stop offset="0" stop-color="#10b0cc"/><stop offset="0.25" stop-color="#1cc4d8"/><stop offset="0.5" stop-color="#3fd0dc"/><stop offset="0.72" stop-color="#9adcdc"/><stop offset="0.88" stop-color="#d6e6dc"/><stop offset="1" stop-color="#e6e6d6"/></linearGradient><filter id="bl" x="-50%" y="-50%" width="200%" height="200%"><feGaussianBlur stdDeviation="1.6"/></filter><filter id="bl3" x="-50%" y="-50%" width="200%" height="200%"><feGaussianBlur stdDeviation="6"/></filter><filter id="bl2" x="-50%" y="-50%" width="200%" height="200%"><feGaussianBlur stdDeviation="0.8"/></filter><clipPath id="cp"><rect x="0" y="0" width="385" height="222"/></clipPath></defs><g clip-path="url(#cp)"><rect x="0" y="0" width="385" height="112.5" fill="url(#sky)"/><rect x="0" y="112.5" width="385" height="109.5" fill="url(#sea)"/><ellipse cx="320" cy="20" rx="55" ry="10" fill="#fff" opacity="0.35" filter="url(#bl3)"/><ellipse cx="300" cy="55" rx="80" ry="9" fill="#fff" opacity="0.3" filter="url(#bl3)"/><ellipse cx="230" cy="62" rx="40" ry="8" fill="#fff" opacity="0.3" filter="url(#bl3)"/><ellipse cx="370" cy="80" rx="20" ry="5" fill="#fff" opacity="0.5" filter="url(#bl3)"/><g filter="url(#bl)" opacity="0.97"><circle cx="28.6" cy="22.4" r="6.5" fill="#f4f7fb"/><circle cx="51.1" cy="20.8" r="9.6" fill="#f4f7fb"/><circle cx="7.3" cy="2.5" r="6.6" fill="#f4f7fb"/><circle cx="48.4" cy="17.7" r="7.6" fill="#f4f7fb"/><circle cx="68.6" cy="32.4" r="8.8" fill="#f4f7fb"/><circle cx="85.6" cy="49.9" r="8.0" fill="#f4f7fb"/><circle cx="11.9" cy="10.3" r="11.7" fill="#f4f7fb"/><circle cx="22.6" cy="16.9" r="8.6" fill="#f4f7fb"/><circle cx="47.3" cy="21.2" r="7.4" fill="#f4f7fb"/><circle cx="65.1" cy="30.2" r="10.1" fill="#f4f7fb"/><circle cx="42.6" cy="29.5" r="10.9" fill="#f4f7fb"/><circle cx="28.2" cy="17.4" r="12.1" fill="#f4f7fb"/><circle cx="67.3" cy="42.7" r="6.8" fill="#f4f7fb"/><circle cx="46.7" cy="17.9" r="9.4" fill="#f4f7fb"/><circle cx="11.2" cy="13.7" r="10.0" fill="#f4f7fb"/><circle cx="80.8" cy="43.5" r="10.2" fill="#f4f7fb"/><circle cx="56.5" cy="34.9" r="12.6" fill="#f4f7fb"/><circle cx="50.3" cy="18.5" r="10.9" fill="#f4f7fb"/><circle cx="71.1" cy="37.1" r="8.0" fill="#f4f7fb"/><circle cx="42.4" cy="14.6" r="9.2" fill="#f4f7fb"/><circle cx="14.0" cy="7.2" r="11.4" fill="#f4f7fb"/><circle cx="12.6" cy="11.0" r="12.1" fill="#f4f7fb"/><circle cx="11.4" cy="11.8" r="12.2" fill="#f4f7fb"/><circle cx="84.6" cy="34.8" r="8.9" fill="#f4f7fb"/><circle cx="43.4" cy="28.6" r="7.1" fill="#f4f7fb"/><circle cx="16.6" cy="10.3" r="9.4" fill="#f4f7fb"/><circle cx="144.0" cy="53.6" r="7.9" fill="#f4f7fb"/><circle cx="123.5" cy="60.0" r="9.8" fill="#f4f7fb"/><circle cx="141.2" cy="61.4" r="5.4" fill="#f4f7fb"/><circle cx="187.9" cy="80.0" r="10.6" fill="#f4f7fb"/><circle cx="123.5" cy="47.4" r="9.4" fill="#f4f7fb"/><circle cx="80.2" cy="35.8" r="6.1" fill="#f4f7fb"/><circle cx="111.9" cy="43.6" r="6.1" fill="#f4f7fb"/><circle cx="89.5" cy="34.5" r="11.1" fill="#f4f7fb"/><circle cx="145.0" cy="58.6" r="7.4" fill="#f4f7fb"/><circle cx="115.8" cy="58.1" r="12.0" fill="#f4f7fb"/><circle cx="133.3" cy="50.0" r="5.7" fill="#f4f7fb"/><circle cx="115.6" cy="57.0" r="6.1" fill="#f4f7fb"/><circle cx="89.9" cy="39.4" r="6.0" fill="#f4f7fb"/><circle cx="134.9" cy="60.2" r="11.8" fill="#f4f7fb"/><circle cx="182.4" cy="68.7" r="7.6" fill="#f4f7fb"/><circle cx="103.6" cy="45.2" r="10.5" fill="#f4f7fb"/><circle cx="113.5" cy="56.2" r="11.9" fill="#f4f7fb"/><circle cx="182.9" cy="77.2" r="10.2" fill="#f4f7fb"/><circle cx="106.4" cy="44.8" r="5.2" fill="#f4f7fb"/><circle cx="79.7" cy="35.3" r="9.8" fill="#f4f7fb"/><circle cx="189.2" cy="83.3" r="11.9" fill="#f4f7fb"/><circle cx="187.7" cy="71.7" r="6.6" fill="#f4f7fb"/><circle cx="97.9" cy="47.9" r="11.3" fill="#f4f7fb"/><circle cx="176.3" cy="74.1" r="10.6" fill="#f4f7fb"/><circle cx="92.3" cy="47.9" r="10.5" fill="#f4f7fb"/><circle cx="165.9" cy="62.9" r="10.5" fill="#f4f7fb"/><circle cx="39.8" cy="74.8" r="7.0" fill="#f4f7fb"/><circle cx="47.3" cy="73.4" r="5.9" fill="#f4f7fb"/><circle cx="13.9" cy="66.2" r="9.0" fill="#f4f7fb"/><circle cx="26.2" cy="68.1" r="8.3" fill="#f4f7fb"/><circle cx="37.1" cy="62.1" r="5.1" fill="#f4f7fb"/><circle cx="85.2" cy="91.3" r="9.7" fill="#f4f7fb"/><circle cx="48.5" cy="76.3" r="6.1" fill="#f4f7fb"/><circle cx="25.6" cy="60.2" r="7.9" fill="#f4f7fb"/><circle cx="28.2" cy="58.7" r="9.6" fill="#f4f7fb"/><circle cx="35.9" cy="69.4" r="9.5" fill="#f4f7fb"/><circle cx="48.2" cy="70.6" r="7.7" fill="#f4f7fb"/><circle cx="41.6" cy="73.4" r="5.9" fill="#f4f7fb"/><circle cx="15.1" cy="49.9" r="7.4" fill="#f4f7fb"/><circle cx="65.3" cy="79.0" r="7.6" fill="#f4f7fb"/><circle cx="56.2" cy="69.2" r="7.8" fill="#f4f7fb"/><circle cx="25.1" cy="68.6" r="7.5" fill="#f4f7fb"/><circle cx="56.3" cy="82.4" r="7.2" fill="#f4f7fb"/><circle cx="56.0" cy="77.9" r="8.5" fill="#f4f7fb"/><circle cx="129.6" cy="25.3" r="4.9" fill="#f4f7fb"/><circle cx="140.0" cy="34.7" r="3.5" fill="#f4f7fb"/><circle cx="138.3" cy="31.9" r="3.3" fill="#f4f7fb"/><circle cx="185.0" cy="81.3" r="3.7" fill="#f4f7fb"/><circle cx="184.3" cy="91.9" r="5.7" fill="#f4f7fb"/><circle cx="192.4" cy="91.3" r="3.4" fill="#f4f7fb"/><circle cx="261.9" cy="97.4" r="5.9" fill="#f4f7fb"/><circle cx="210.6" cy="101.0" r="5.5" fill="#f4f7fb"/><circle cx="188.4" cy="89.2" r="4.0" fill="#f4f7fb"/><circle cx="189.7" cy="93.1" r="3.1" fill="#f4f7fb"/><circle cx="223.9" cy="88.3" r="4.0" fill="#f4f7fb"/><circle cx="231.3" cy="90.3" r="6.0" fill="#f4f7fb"/><circle cx="253.5" cy="93.9" r="3.8" fill="#f4f7fb"/><circle cx="7.6" cy="77.1" r="3.4" fill="#f4f7fb"/><circle cx="20.4" cy="93.5" r="3.8" fill="#f4f7fb"/><circle cx="12.9" cy="84.1" r="5.1" fill="#f4f7fb"/><circle cx="-2.6" cy="84.8" r="4.3" fill="#f4f7fb"/><circle cx="11.0" cy="83.6" r="5.4" fill="#f4f7fb"/></g><g filter="url(#bl3)" opacity="0.35"><circle cx="31.6" cy="26.4" r="3.9" fill="#9ab8d8"/><circle cx="71.6" cy="36.4" r="5.3" fill="#9ab8d8"/><circle cx="50.3" cy="25.2" r="4.5" fill="#9ab8d8"/><circle cx="70.3" cy="46.7" r="4.1" fill="#9ab8d8"/><circle cx="59.5" cy="38.9" r="7.6" fill="#9ab8d8"/><circle cx="17.0" cy="11.2" r="6.8" fill="#9ab8d8"/><circle cx="46.4" cy="32.6" r="4.2" fill="#9ab8d8"/><circle cx="144.2" cy="65.4" r="3.2" fill="#9ab8d8"/><circle cx="114.9" cy="47.6" r="3.6" fill="#9ab8d8"/><circle cx="136.3" cy="54.0" r="3.4" fill="#9ab8d8"/><circle cx="185.4" cy="72.7" r="4.5" fill="#9ab8d8"/><circle cx="109.4" cy="48.8" r="3.1" fill="#9ab8d8"/><circle cx="100.9" cy="51.9" r="6.8" fill="#9ab8d8"/><circle cx="42.8" cy="78.8" r="4.2" fill="#9ab8d8"/><circle cx="40.1" cy="66.1" r="3.0" fill="#9ab8d8"/><circle cx="31.2" cy="62.7" r="5.7" fill="#9ab8d8"/><circle cx="18.1" cy="53.9" r="4.4" fill="#9ab8d8"/><circle cx="59.3" cy="86.4" r="4.3" fill="#9ab8d8"/><circle cx="141.3" cy="35.9" r="2.0" fill="#9ab8d8"/><circle cx="264.9" cy="101.4" r="3.5" fill="#9ab8d8"/><circle cx="226.9" cy="92.3" r="2.4" fill="#9ab8d8"/><circle cx="23.4" cy="97.5" r="2.3" fill="#9ab8d8"/></g><rect x="57" y="108" width="48" height="5" fill="#6e5e4c" filter="url(#bl2)"/><rect x="150" y="112" width="125" height="8" fill="#5a5048"/><path d="M172 112 Q176.5 103 181 112z" fill="#8e806a"/><path d="M180 112 Q184.5 103 189 112z" fill="#8e806a"/><path d="M188 112 Q192.5 103 197 112z" fill="#8e806a"/><path d="M196 112 Q200.5 103 205 112z" fill="#8e806a"/><path d="M204 112 Q208.5 103 213 112z" fill="#8e806a"/><path d="M212 112 Q216.5 103 221 112z" fill="#8e806a"/><path d="M220 112 Q224.5 103 229 112z" fill="#8e806a"/><path d="M228 112 Q232.5 103 237 112z" fill="#8e806a"/><path d="M236 112 Q240.5 103 245 112z" fill="#8e806a"/><path d="M244 112 Q248.5 103 253 112z" fill="#8e806a"/><path d="M252 112 Q256.5 103 261 112z" fill="#8e806a"/><path d="M260 112 Q264.5 103 269 112z" fill="#8e806a"/><path d="M268 112 Q272.5 103 277 112z" fill="#8e806a"/><rect x="107" y="108" width="20" height="13" fill="#4a3a2c"/><rect x="127" y="107" width="27" height="14" fill="#e2e6e2"/><path d="M124 108 L136 95 L150 95 L160 108z" fill="#8a7a62"/><path d="M146 108 L155 97 L165 97 L176 108z" fill="#7a6c56"/><rect x="127" y="120" width="27" height="3" fill="#6a5a4a"/><rect x="160" y="114" width="95" height="5" fill="#4e463e"/><rect x="254" y="108" width="32" height="7" fill="#4e8a3c"/><rect x="296" y="108" width="26" height="7" fill="#4e8a3c"/><rect x="254" y="114" width="32" height="5" fill="#d0d4cc"/><path d="M284 108 L298 99 L322 99 L338 108z" fill="#857660"/><rect x="290" y="107" width="44" height="8" fill="#d8dcd6"/><rect x="334" y="109" width="18" height="8" fill="#4a4038"/><path d="M270 116 L385 124 L385 134 L270 121z" fill="#5e5850"/><rect x="348" y="113" width="14" height="6" fill="#3a4a50"/><line x1="246" y1="88" x2="247.5" y2="108" stroke="#6a5a48" stroke-width="1.1"/><g opacity="0.95"><ellipse cx="246" cy="88" rx="6" ry="3" fill="#2f5a2c"/><path d="M238 93 Q242 86 246 88 Q250 86 254 93 M241 84 L246 88 L251 84" stroke="#3a6a30" stroke-width="1.8" fill="none"/></g><line x1="262" y1="80" x2="263.5" y2="108" stroke="#6a5a48" stroke-width="1.1"/><g opacity="0.95"><ellipse cx="262" cy="80" rx="6" ry="3" fill="#2f5a2c"/><path d="M254 85 Q258 78 262 80 Q266 78 270 85 M257 76 L262 80 L267 76" stroke="#3a6a30" stroke-width="1.8" fill="none"/></g><line x1="270" y1="88" x2="271.5" y2="108" stroke="#6a5a48" stroke-width="1.1"/><g opacity="0.95"><ellipse cx="270" cy="88" rx="6" ry="3" fill="#2f5a2c"/><path d="M262 93 Q266 86 270 88 Q274 86 278 93 M265 84 L270 88 L275 84" stroke="#3a6a30" stroke-width="1.8" fill="none"/></g><line x1="290" y1="78" x2="291.5" y2="108" stroke="#6a5a48" stroke-width="1.1"/><g opacity="0.95"><ellipse cx="290" cy="78" rx="6" ry="3" fill="#2f5a2c"/><path d="M282 83 Q286 76 290 78 Q294 76 298 83 M285 74 L290 78 L295 74" stroke="#3a6a30" stroke-width="1.8" fill="none"/></g><line x1="300" y1="84" x2="301.5" y2="108" stroke="#6a5a48" stroke-width="1.1"/><g opacity="0.95"><ellipse cx="300" cy="84" rx="6" ry="3" fill="#2f5a2c"/><path d="M292 89 Q296 82 300 84 Q304 82 308 89 M295 80 L300 84 L305 80" stroke="#3a6a30" stroke-width="1.8" fill="none"/></g><line x1="312" y1="90" x2="313.5" y2="108" stroke="#6a5a48" stroke-width="1.1"/><g opacity="0.95"><ellipse cx="312" cy="90" rx="6" ry="3" fill="#2f5a2c"/><path d="M304 95 Q308 88 312 90 Q316 88 320 95 M307 86 L312 90 L317 86" stroke="#3a6a30" stroke-width="1.8" fill="none"/></g><line x1="280" y1="92" x2="281.5" y2="108" stroke="#6a5a48" stroke-width="1.1"/><g opacity="0.95"><ellipse cx="280" cy="92" rx="6" ry="3" fill="#2f5a2c"/><path d="M272 97 Q276 90 280 92 Q284 90 288 97 M275 88 L280 92 L285 88" stroke="#3a6a30" stroke-width="1.8" fill="none"/></g><path d="M16 124 L38 124 L34 129 L20 129z" fill="#5a4a3a"/><line x1="27" y1="103" x2="27" y2="124" stroke="#5a4a3a" stroke-width="1"/><rect x="22" y="118" width="10" height="6" fill="#7a6a58"/><ellipse cx="90" cy="150" rx="60" ry="10" fill="#e8fff8" opacity="0.25" filter="url(#bl3)"/><ellipse cx="250" cy="160" rx="80" ry="10" fill="#e8fff8" opacity="0.2" filter="url(#bl3)"/><ellipse cx="180" cy="185" rx="120" ry="12" fill="#e8fff8" opacity="0.3" filter="url(#bl3)"/><ellipse cx="60" cy="200" rx="80" ry="10" fill="#e8fff8" opacity="0.4" filter="url(#bl3)"/><ellipse cx="300" cy="205" rx="80" ry="10" fill="#e8fff8" opacity="0.35" filter="url(#bl3)"/></g></svg>
<div class="t" style="left:517px;top:913px;font-family:'Liberation Serif',serif;font-size:18.5px;line-height:18.5px;color:#111;transform:rotate(-21deg);transform-origin:0 100%">XXX 公司出品</div>
<div class="a" style="left:1169px;top:192px;width:1px;height:825px;background:#c6c6c6"></div>
<div class="t" style="left:1183px;top:206px;font-size:21px;color:#2b579a;">限制编辑</div>
<svg style="left:1409px;top:210px;" width="10" height="6" viewBox="0 0 10 6"><path d="M0 0 H10 L5 5.5z" fill="#777"/></svg>
<svg style="left:1426px;top:207px;" width="12" height="12" viewBox="0 0 12 12"><path d="M1.5 1.5 L10.5 10.5 M10.5 1.5 L1.5 10.5" stroke="#666" stroke-width="2"/></svg>
<div class="t" style="left:1183px;top:242px;font-size:12px;color:#444;">权限</div>
<div class="a" style="left:1183px;top:256px;width:253px;height:1px;background:#c6c6c6"></div>
<div class="t" style="left:1192px;top:268px;font-size:12px;color:#444;">文档受保护，以防止误编辑。</div>
<div class="t" style="left:1192px;top:290px;font-size:12px;color:#444;">可以在此区域内自由编辑。</div>
<div class="t" style="left:1192px;top:345px;font-size:12px;color:#444;">仅可使用部分样式格式化文本。</div>
<div class="t" style="left:1192px;top:368px;font-size:12px;color:#2e6eb5;">有效样式...</div>
<div class="a" style="left:1192px;top:388px;width:150px;height:30px;background:#fff;border:1px solid #adadad"></div>
<div class="t" style="left:1201px;top:397px;font-size:12px;color:#333;">查找下一个可编辑的区域</div>
<div class="a" style="left:1192px;top:427px;width:150px;height:30px;background:#fff;border:2px solid #adadad"></div>
<div class="t" style="left:1207px;top:436px;font-size:12px;color:#333;">显示可编辑的所有区域</div>
<div class="a" style="left:1192px;top:465px;width:13px;height:13px;background:#fff;border:1px solid #adadad"></div>
<svg style="left:1194px;top:467px;" width="10" height="10" viewBox="0 0 10 10"><path d="M1.5 5 L4 7.5 L8.5 2" stroke="#666" stroke-width="1.5" fill="none"/></svg>
<div class="t" style="left:1209px;top:466px;font-size:12px;color:#444;">突出显示可编辑的区域</div>
<div class="a" style="left:1192px;top:965px;width:66px;height:30px;background:#d5e1f2;border:1px solid #a4c2ea"></div>
<div class="t" style="left:1201px;top:974px;font-size:12px;color:#444;">停止保护</div>
<div class="t" style="left:6px;top:1021px;font-size:12px;color:#444;letter-spacing:0.3px">第 8 页，共 11 页</div>
<div class="t" style="left:122px;top:1021px;font-size:12px;color:#444;letter-spacing:0.35px">240/2169 个字</div>
<div class="t" style="left:223px;top:1021px;font-size:12px;color:#444;letter-spacing:0px">修订: 关闭</div>
<div class="t" style="left:297px;top:1021px;font-size:12px;color:#444;letter-spacing:0px">插入</div>
<svg style="left:338px;top:1021px;" width="13" height="12" viewBox="0 0 13 12"><circle cx="3" cy="3" r="2.6" fill="#666"/><rect x="0.5" y="4.5" width="12" height="7" fill="none" stroke="#666"/><rect x="2.0" y="6.0" width="1.2" height="1.2" fill="#666"/><rect x="2.0" y="8.2" width="1.2" height="1.2" fill="#666"/><rect x="4.5" y="6.0" width="1.2" height="1.2" fill="#666"/><rect x="4.5" y="8.2" width="1.2" height="1.2" fill="#666"/><rect x="7.0" y="6.0" width="1.2" height="1.2" fill="#666"/><rect x="7.0" y="8.2" width="1.2" height="1.2" fill="#666"/><rect x="9.5" y="6.0" width="1.2" height="1.2" fill="#666"/><rect x="9.5" y="8.2" width="1.2" height="1.2" fill="#666"/></svg>
<svg style="left:1153px;top:1020px;" width="15" height="14" viewBox="0 0 15 14"><path d="M7.5 2 Q4 0.5 0.5 1.5 V12 Q4 11 7.5 12.5 Q11 11 14.5 12 V1.5 Q11 0.5 7.5 2z M7.5 2 V12.5" fill="none" stroke="#555"/><line x1="2" y1="4.5" x2="6" y2="4.5" stroke="#555"/><line x1="9" y1="4.5" x2="13" y2="4.5" stroke="#555"/><line x1="2" y1="6.5" x2="6" y2="6.5" stroke="#555"/><line x1="9" y1="6.5" x2="13" y2="6.5" stroke="#555"/><line x1="2" y1="8.5" x2="6" y2="8.5" stroke="#555"/><line x1="9" y1="8.5" x2="13" y2="8.5" stroke="#555"/></svg>
<div class="a" style="left:1180px;top:1018px;width:38px;height:21px;background:#c6c6c6"></div>
<svg style="left:1191px;top:1020px;" width="16" height="14" viewBox="0 0 16 14"><rect x="0.5" y="0.5" width="14" height="12" fill="none" stroke="#555"/><line x1="2.5" y1="3.5" x2="12.5" y2="3.5" stroke="#555"/><line x1="2.5" y1="5.5" x2="12.5" y2="5.5" stroke="#555"/><line x1="2.5" y1="7.5" x2="12.5" y2="7.5" stroke="#555"/><line x1="2.5" y1="9.5" x2="12.5" y2="9.5" stroke="#555"/></svg>
<svg style="left:1229px;top:1020px;" width="17" height="15" viewBox="0 0 17 15"><path d="M0.5 0.5 H11.5 V7 M0.5 0.5 V12.5 H7" fill="none" stroke="#555"/><line x1="2.5" y1="3.5" x2="9.5" y2="3.5" stroke="#555"/><line x1="2.5" y1="5.5" x2="9.5" y2="5.5" stroke="#555"/><line x1="2.5" y1="7.5" x2="7" y2="7.5" stroke="#555"/><circle cx="12" cy="10.5" r="4" fill="#666"/><path d="M9.5 9.5 Q12 11 14 8.5" stroke="#f1f1f1" fill="none"/></svg>
<div class="a" style="left:1261px;top:1027px;width:6px;height:2px;background:#555"></div>
<div class="a" style="left:1271px;top:1027.5px;width:104px;height:1px;background:#999"></div>
<div class="a" style="left:1319px;top:1022px;width:4px;height:11px;background:#555"></div>
<svg style="left:1375px;top:1023px;" width="8" height="8" viewBox="0 0 8 8"><path d="M4 0 V8 M0 4 H8" stroke="#555" stroke-width="1.8"/></svg>
<div class="t" style="left:1398px;top:1021px;font-size:12px;color:#444;">100%</div>
<div class="t" style="left:1334px;top:990px;font-size:21px;font-weight:bold;color:#5b9bd5;opacity:0.92">极光下载站</div>
<div class="t" style="left:1335px;top:1014px;font-size:15.5px;font-weight:bold;color:#3cc070;opacity:0.8;letter-spacing:0.2px">www.xz7.com</div>
<svg style="left:1290px;top:988px;" width="46" height="42" viewBox="0 0 46 42"><path d="M42 2 Q20 0 8 14 Q0 26 10 32 Q18 35 24 26 Q16 30 12 24 Q8 14 26 6z" fill="#4f94d6" opacity="0.9"/><path d="M40 16 Q28 12 18 20 Q12 26 20 26 Q30 20 36 22 Q28 36 8 40 Q34 40 40 26z" fill="#4cbb6a" opacity="0.9"/><path d="M8 40 Q20 38 28 32" stroke="#c8e04a" stroke-width="3" fill="none" opacity="0.8"/></svg>
<svg style="left:0;top:0" width="1450" height="1039" viewBox="0 0 1450 1039"><defs><filter id="sh" x="-20%" y="-20%" width="140%" height="140%"><feDropShadow dx="2.5" dy="3" stdDeviation="2.5" flood-color="#000" flood-opacity="0.55"/></filter></defs><g filter="url(#sh)"><line x1="981" y1="492" x2="898.3" y2="449.0" stroke="#ff0000" stroke-width="3.6" stroke-linecap="round"/><path d="M881 440 L907.5 445.3 L898.3 449.0 L900.6 458.6z" fill="#ff0000"/><line x1="1114" y1="460" x2="1166.6" y2="465.5" stroke="#ff0000" stroke-width="3.6" stroke-linecap="round"/><path d="M1186 467.5 L1159.4 471.8 L1166.6 465.5 L1160.9 457.8z" fill="#ff0000"/><line x1="1171.5" y1="821.5" x2="1212.7" y2="937.1" stroke="#ff0000" stroke-width="3.6" stroke-linecap="round"/><path d="M1219.3 955.5 L1204.0 933.4 L1212.7 937.1 L1217.2 928.7z" fill="#ff0000"/></g></svg>
<svg style="left:1247px;top:985px;" width="14" height="22" viewBox="0 0 14 22"><path d="M1 1 V16 L4.5 12.5 L7.5 19.5 L10 18.5 L7 11.5 H12z" fill="#fff" stroke="#000" stroke-width="1.1" stroke-linejoin="round"/></svg>
</body></html>
